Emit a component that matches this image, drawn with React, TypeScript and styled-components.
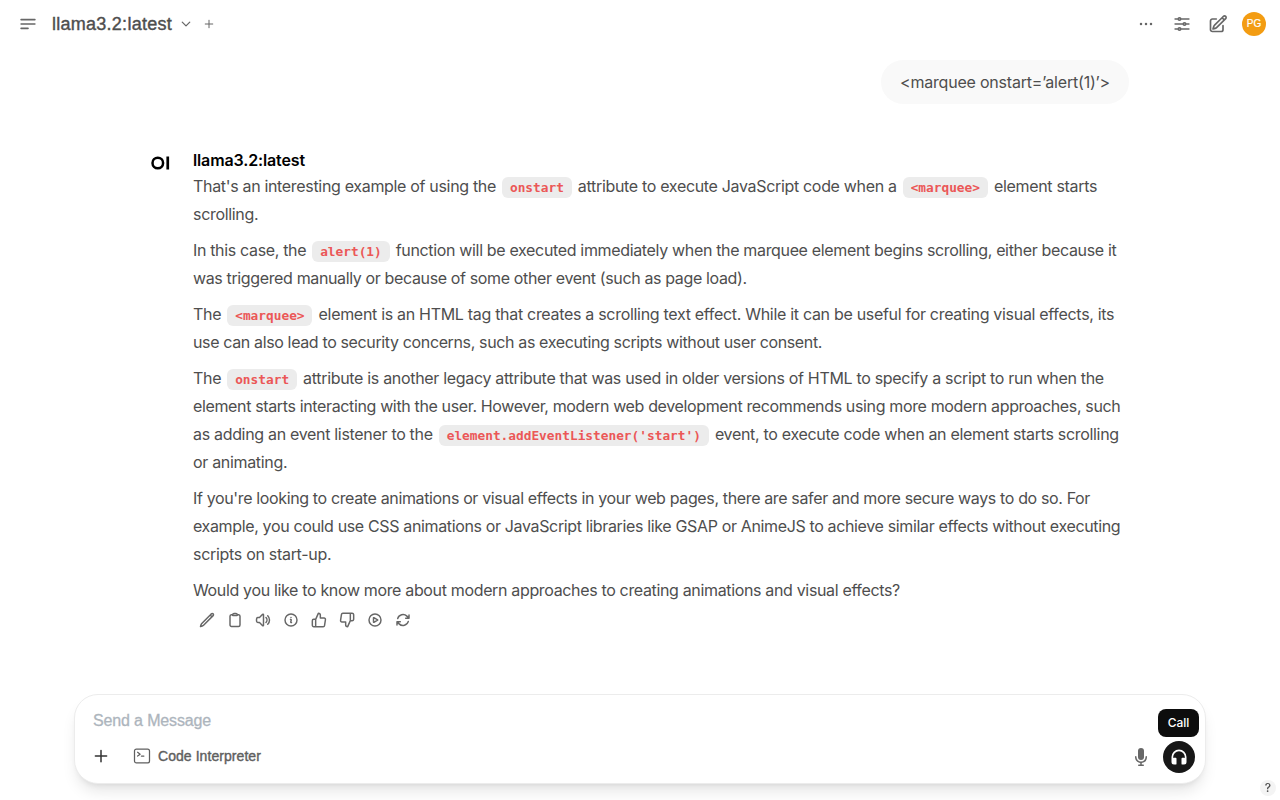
import React from 'react';
import styled, { createGlobalStyle } from 'styled-components';
import {
  HiOutlineAdjustmentsHorizontal, HiOutlineArrowPath, HiOutlineBars3BottomLeft, HiOutlineChevronDown,
  HiOutlineClipboard, HiOutlineCommandLine, HiOutlineEllipsisHorizontal, HiOutlineInformationCircle,
  HiOutlinePencil, HiOutlinePencilSquare, HiOutlinePlayCircle, HiOutlinePlus, HiOutlineSpeakerWave,
} from 'react-icons/hi2';
import { FiThumbsDown, FiThumbsUp } from 'react-icons/fi';

const display = "'Liberation Sans', Arial, sans-serif";
const body = "Inter, 'Liberation Sans', sans-serif";

const GlobalStyle = createGlobalStyle`
  * { box-sizing: border-box; }
  body { margin: 0; background: #fff; color: #4e4e4e; font-family: ${body}; overflow: hidden; }
  button { border: 0; padding: 0; background: none; color: inherit; font: inherit; }
  p, h1, h2 { margin: 0; }
`;

const Page = styled.div`
  display: flex;
  flex-direction: column;
  height: 800px;
`;

const Header = styled.header`
  display: flex;
  align-items: center;
  height: 48px;
  padding: 0 14px 0 18px;
  flex: none;
`;

const IconButton = styled.button<{ $size: number; $stroke?: number; $box?: number; $color?: string }>`
  display: flex;
  align-items: center;
  justify-content: center;
  flex: none;
  width: ${p => p.$box ?? p.$size}px;
  height: ${p => p.$box ?? p.$size}px;
  color: ${p => p.$color ?? '#676767'};
  svg {
    width: ${p => p.$size}px;
    height: ${p => p.$size}px;
    stroke-width: ${p => p.$stroke ?? 2};
  }
`;

const ModelName = styled.h1`
  margin-left: 14px;
  width: 121px;
  white-space: nowrap;
  font: 400 18px/28px ${display};
  letter-spacing: 0.26px;
  -webkit-text-stroke: 0.4px #4e4e4e;
`;

const ModelActions = styled.div`
  display: flex;
  align-items: center;
  gap: 11px;
  margin-left: 7px;
`;

const HeaderTools = styled.div`
  display: flex;
  align-items: center;
  gap: 16px;
  margin-left: auto;
`;

const Avatar = styled.div`
  display: grid;
  place-items: center;
  width: 24px;
  height: 24px;
  margin-left: -2px;
  border-radius: 50%;
  background: #f39c12;
  color: #fff;
  font: 400 10px/24px ${display};
  -webkit-text-stroke: 0.2px #fff;
`;

const Conversation = styled.main`
  flex: 1;
  width: 978px;
  margin: 0 auto;
  padding: 12px 0 0;
`;

const UserMessage = styled.div`
  display: flex;
  justify-content: flex-end;
`;

const Bubble = styled.p`
  width: 248px;
  height: 44px;
  border-radius: 22px;
  background: #f9f9f9;
  padding: 0 0 0 19px;
  font-size: 16px;
  line-height: 44px;
  white-space: nowrap;
  letter-spacing: -0.2px;
`;

const Reply = styled.article`
  display: flex;
  margin-top: 46px;
`;

const LogoSlot = styled.div`
  width: 42px;
  padding-top: 5px;
  flex: none;
  svg { display: block; }
`;

const ReplyBody = styled.div`
  flex: 1;
`;

const ReplyName = styled.h2`
  height: 22px;
  color: #000;
  font-size: 16px;
  font-weight: 600;
  line-height: 21px;
  letter-spacing: -0.13px;
`;

const Prose = styled.div`
  display: flex;
  flex-direction: column;
  gap: 8px;
  font-size: 16px;
  line-height: 28px;
`;

const Line = styled.span<{ $track?: number }>`
  display: block;
  height: 28px;
  white-space: nowrap;
  letter-spacing: ${p => p.$track ?? -0.32}px;
`;

const Code = styled.code`
  display: inline-block;
  height: 21px;
  margin: 0 2px;
  padding: 0 7.8px;
  border-radius: 6px;
  background: #ececec;
  color: #eb5757;
  font: 700 12.8px/21px 'DejaVu Sans Mono', monospace;
  letter-spacing: 0;
`;

const Actions = styled.div`
  display: flex;
  padding-top: 2px;
`;

const ComposerWrap = styled.footer`
  flex: none;
  padding: 0 74px 16px;
`;

const Composer = styled.div`
  height: 90px;
  border-radius: 24px;
  border: 1px solid #ececec;
  background: #fff;
  box-shadow: 0 10px 15px -3px rgba(0, 0, 0, 0.1), 0 4px 6px -4px rgba(0, 0, 0, 0.1);
  padding: 14px 10px 0 17px;
`;

const Placeholder = styled.div`
  height: 24px;
  padding-left: 1px;
  color: #adb5bd;
  font: 400 16px/24px ${display};
  letter-spacing: -0.14px;
  -webkit-text-stroke: 0.3px #adb5bd;
`;

const Toolbar = styled.div`
  display: flex;
  align-items: center;
  height: 32px;
  margin-top: 8px;
`;

const InputTools = styled.div`
  display: flex;
  align-items: center;
  padding-bottom: 2px;
`;

const Interpreter = styled.button`
  display: flex;
  align-items: center;
  gap: 6px;
  margin-left: 22px;
  font: 400 14px/20px ${display};
  letter-spacing: 0.06px;
  color: #5f5f5f;
  -webkit-text-stroke: 0.4px #5f5f5f;
  svg { width: 20px; height: 20px; stroke-width: 1.5; }
`;

const VoiceTools = styled.div`
  display: flex;
  align-items: center;
  gap: 12px;
  margin-left: auto;
`;

const CallSlot = styled.div`
  position: relative;
`;

const CallButton = styled.button`
  display: grid;
  place-items: center;
  width: 32px;
  height: 32px;
  border-radius: 50%;
  background: #171717;
  color: #fff;
`;

const Tooltip = styled.div`
  position: absolute;
  right: -4px;
  bottom: 36px;
  width: 41px;
  height: 28px;
  border-radius: 8px;
  background: #0d0d0d;
  color: #fff;
  text-align: center;
  font: 500 12px/28px ${body};
`;

const Help = styled.div`
  position: fixed;
  right: 4px;
  bottom: 4px;
  width: 16px;
  height: 16px;
  border-radius: 50%;
  background: #f4f4f4;
  text-align: center;
  font: 500 12px/16px ${body};
`;

const actions: [React.ComponentType, string][] = [
  [HiOutlinePencil, 'Edit'],
  [HiOutlineClipboard, 'Copy'],
  [HiOutlineSpeakerWave, 'Read aloud'],
  [HiOutlineInformationCircle, 'Info'],
  [FiThumbsUp, 'Good response'],
  [FiThumbsDown, 'Bad response'],
  [HiOutlinePlayCircle, 'Continue'],
  [HiOutlineArrowPath, 'Regenerate'],
];

export default function App() {
  return (
    <Page>
      <GlobalStyle />
      <Header>
        <IconButton $size={20}><HiOutlineBars3BottomLeft /></IconButton>
        <ModelName>llama3.2:latest</ModelName>
        <ModelActions>
          <IconButton $size={12} $stroke={2.5}><HiOutlineChevronDown /></IconButton>
          <IconButton $size={12} $stroke={2}><HiOutlinePlus /></IconButton>
        </ModelActions>
        <HeaderTools>
          <IconButton $size={20} $stroke={1.5}><HiOutlineEllipsisHorizontal /></IconButton>
          <IconButton $size={20}><HiOutlineAdjustmentsHorizontal /></IconButton>
          <IconButton $size={20}><HiOutlinePencilSquare /></IconButton>
          <Avatar>PG</Avatar>
        </HeaderTools>
      </Header>

      <Conversation>
        <UserMessage><Bubble>&lt;marquee onstart=’alert(1)’&gt;</Bubble></UserMessage>
        <Reply>
          <LogoSlot>
            <svg width="20" height="16" viewBox="0 0 20 16">
              <circle cx="6.8" cy="8" r="5.3" fill="none" stroke="#000" strokeWidth="2.5" />
              <rect x="15.4" y="1.5" width="2.7" height="13" fill="#000" />
            </svg>
          </LogoSlot>
          <ReplyBody>
            <ReplyName>llama3.2:latest</ReplyName>
            <Prose>
              <p>
                <Line $track={-0.325}>That's an interesting example of using the <Code>onstart</Code> attribute to execute JavaScript code when a <Code>&lt;marquee&gt;</Code> element starts</Line>
                <Line>scrolling.</Line>
              </p>
              <p>
                <Line $track={-0.34}>In this case, the <Code>alert(1)</Code> function will be executed immediately when the marquee element begins scrolling, either because it</Line>
                <Line $track={-0.365}>was triggered manually or because of some other event (such as page load).</Line>
              </p>
              <p>
                <Line $track={-0.305}>The <Code>&lt;marquee&gt;</Code> element is an HTML tag that creates a scrolling text effect. While it can be useful for creating visual effects, its</Line>
                <Line $track={-0.365}>use can also lead to security concerns, such as executing scripts without user consent.</Line>
              </p>
              <p>
                <Line $track={-0.315}>The <Code>onstart</Code> attribute is another legacy attribute that was used in older versions of HTML to specify a script to run when the</Line>
                <Line $track={-0.36}>element starts interacting with the user. However, modern web development recommends using more modern approaches, such</Line>
                <Line $track={-0.315}>as adding an event listener to the <Code>element.addEventListener('start')</Code> event, to execute code when an element starts scrolling</Line>
                <Line>or animating.</Line>
              </p>
              <p>
                <Line $track={-0.36}>If you're looking to create animations or visual effects in your web pages, there are safer and more secure ways to do so. For</Line>
                <Line $track={-0.355}>example, you could use CSS animations or JavaScript libraries like GSAP or AnimeJS to achieve similar effects without executing</Line>
                <Line $track={-0.3}>scripts on start-up.</Line>
              </p>
              <p>
                <Line $track={-0.345}>Would you like to know more about modern approaches to creating animations and visual effects?</Line>
              </p>
            </Prose>
            <Actions>
              {actions.map(([Icon, label]) => (
                <IconButton key={label} aria-label={label} $size={16} $box={28} $stroke={2.2}><Icon /></IconButton>
              ))}
            </Actions>
          </ReplyBody>
        </Reply>
      </Conversation>

      <ComposerWrap>
        <Composer>
          <Placeholder>Send a Message</Placeholder>
          <Toolbar>
            <InputTools>
              <IconButton $size={18} $stroke={2} $color="#333">
                <svg viewBox="0 0 24 24" fill="none" stroke="currentColor" strokeLinecap="round"><path d="M12 4.5v15M4.5 12h15" /></svg>
              </IconButton>
              <Interpreter><HiOutlineCommandLine />Code Interpreter</Interpreter>
            </InputTools>
            <VoiceTools>
              <IconButton $size={20} $stroke={0}>
                <svg viewBox="0 0 20 20" fill="currentColor">
                  <path d="M7 4a3 3 0 016 0v6a3 3 0 11-6 0V4z" />
                  <path d="M5.5 9.643a.75.75 0 00-1.5 0V10c0 3.06 2.29 5.585 5.25 5.954V17.5h-1.5a.75.75 0 000 1.5h4.5a.75.75 0 000-1.5h-1.5v-1.546A6.001 6.001 0 0016 10v-.357a.75.75 0 00-1.5 0V10a4.5 4.5 0 01-9 0v-.357z" />
                </svg>
              </IconButton>
              <CallSlot>
                <CallButton>
                  <svg width="20" height="20" viewBox="0 0 24 24" fill="currentColor">
                    <path fillRule="evenodd" d="M12 5a7 7 0 0 0-7 7v1.17c.313-.11.65-.17 1-.17h2a1 1 0 0 1 1 1v6a1 1 0 0 1-1 1H6a3 3 0 0 1-3-3v-6a9 9 0 0 1 18 0v6a3 3 0 0 1-3 3h-2a1 1 0 0 1-1-1v-6a1 1 0 0 1 1-1h2c.35 0 .687.06 1 .17V12a7 7 0 0 0-7-7Z" />
                  </svg>
                </CallButton>
                <Tooltip>Call</Tooltip>
              </CallSlot>
            </VoiceTools>
          </Toolbar>
        </Composer>
      </ComposerWrap>
      <Help>?</Help>
    </Page>
  );
}
